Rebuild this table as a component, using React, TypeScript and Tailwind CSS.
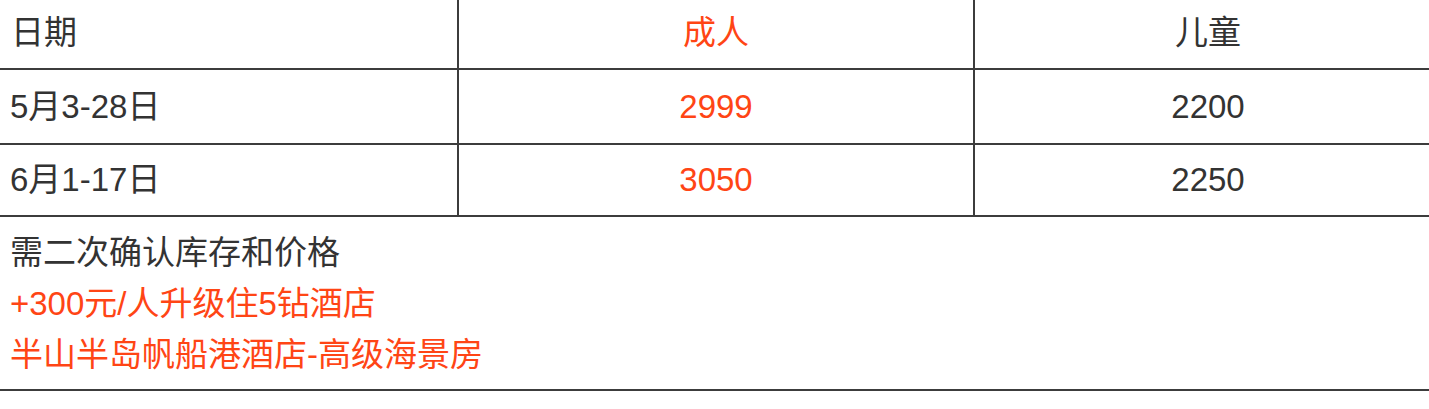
const rows = [
  { date: '5月3-28日', adult: '2999', child: '2200', h: 'h-[75px]' },
  { date: '6月1-17日', adult: '3050', child: '2250', h: 'h-[72px]' },
]

const font = 'font-["Liberation_Sans","Noto_Sans_CJK_SC",sans-serif]'

export default function App() {
  return (
    <div className={`w-[1429px] h-[409px] bg-white text-[33px] text-[#333] ${font}`}>
      <div className="flex h-[70px] border-b-2 border-[#3c3c3c]">
        <div className="w-[459px] border-r-2 border-[#3c3c3c] pl-[11px] flex items-center pb-[3px]">日期</div>
        <div className="w-[516px] border-r-2 border-[#3c3c3c] flex items-center justify-center pb-[3px] text-[#ff4515]">成人</div>
        <div className="flex-1 flex items-center justify-center pb-[3px] pl-[12px]">儿童</div>
      </div>
      {rows.map((r) => (
        <div key={r.date} className={`flex ${r.h} border-b-2 border-[#3c3c3c]`}>
          <div className="w-[459px] border-r-2 border-[#3c3c3c] pl-[10px] flex items-center">{r.date}</div>
          <div className="w-[516px] border-r-2 border-[#3c3c3c] flex items-center justify-center text-[#ff4515]">
            {r.adult}
          </div>
          <div className="flex-1 flex items-center justify-center pl-[12px]">{r.child}</div>
        </div>
      ))}
      <div className="h-[174px] border-b-2 border-[#3c3c3c] pl-[10px] pt-[10px] leading-[51px]">
        <div>需二次确认库存和价格</div>
        <div className="text-[#ff4515]">+300元/人升级住5钻酒店</div>
        <div className="text-[#ff4515]">半山半岛帆船港酒店-高级海景房</div>
      </div>
    </div>
  )
}
